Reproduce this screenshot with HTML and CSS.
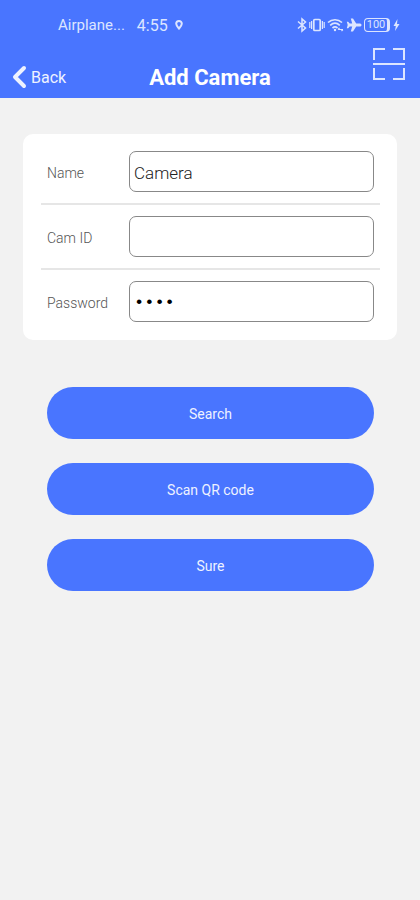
FILE: index.html
```html
<!DOCTYPE html>
<html lang="en">
<head>
<meta charset="utf-8">
<meta name="viewport" content="width=device-width, initial-scale=1">
<title>Add Camera</title>
<link rel="stylesheet" href="styles.css">
</head>
<body>
<header class="header">
  <div class="status">
    <span class="carrier">Airplane...</span>
    <span class="time">4:55</span>
    <svg class="pin" width="8" height="10" viewBox="0 0 8 10"><path d="M4 8.500C2.500 6.700 1.200 5.300 1.200 3.800a2.800 2.800 0 0 1 5.600 0C6.800 5.300 5.500 6.700 4 8.500z" fill="none" stroke="currentColor" stroke-width="2"/></svg>
    <div class="indicators">
      <svg width="10" height="16" viewBox="0 0 10 16" fill="none" stroke="currentColor" stroke-width="1.500"><path d="M1 4.500l7.500 6.500L5 14V2L8.500 5 1 11.500"/></svg>
      <svg width="16" height="16" viewBox="0 0 16 16" fill="none" stroke="currentColor" stroke-width="1.700"><rect x="4.800" y="2.500" width="6.400" height="11" rx="1"/><path d="M2.600 4v8M.8 5v6M13.400 4v8M15.200 5v6" stroke-width="1.200"/></svg>
      <svg width="17" height="16" viewBox="0 0 17 16" fill="none" stroke="currentColor" stroke-width="1.700"><path d="M1 5.500c4-3.700 10-3.700 14 0M3.200 8.300c3-2.600 6.600-2.600 9.600 0M5.500 11c1.700-1.400 3.400-1.400 5 0"/><circle cx="8" cy="13" r="1.200" fill="currentColor" stroke="none"/><path d="M11 12.500h5M11 12.500l1.500-1.500M16 12.500l-1.500 1.500" stroke-width="1.200"/></svg>
      <svg width="16" height="16" viewBox="0 0 16 16" fill="currentColor"><path d="M15.500 8c0-1-.9-1.500-2-1.500H10.200L7 1.500H4.800l1.400 5H3.700L2.200 4.800H.8L1.700 8l-.9 3.200h1.400l1.500-1.700h2.500l-1.400 5H7l3.200-5h3.300C14.600 9.500 15.500 9 15.500 8z"/></svg>
      <span class="battery">100</span>
      <svg width="7" height="12" viewBox="0 0 7 12" fill="currentColor"><path d="M4.500 0L.5 7h2.300L2 12l4.500-7H4z"/></svg>
    </div>
  </div>
  <nav class="nav">
    <a class="back" href="#"><svg width="15" height="24" viewBox="0 0 15 24" fill="none" stroke="currentColor" stroke-width="4" stroke-linecap="round" stroke-linejoin="round"><path d="M12 3L3 12l9 9"/></svg>Back</a>
    <h1 class="title">Add Camera</h1>
    <button class="scan" type="button" aria-label="Scan"><svg width="34" height="34" viewBox="0 0 34 34" fill="none" stroke="currentColor" stroke-width="2"><path d="M2 13V2h11M21 2h11v11M2 21v11h11M21 32h11V21M1 17h32"/></svg></button>
  </nav>
</header>
<main>
  <form class="form">
    <div class="card">
      <div class="row"><label for="name">Name</label><input id="name" type="text" value="Camera"></div>
      <div class="row"><label for="cam">Cam ID</label><input id="cam" type="text"></div>
      <div class="row"><label for="pass">Password</label><input id="pass" type="password" value="8888"></div>
    </div>
    <div class="actions">
      <button class="action" type="button">Search</button>
      <button class="action" type="button">Scan QR code</button>
      <button class="action" type="button">Sure</button>
    </div>
  </form>
</main>
</body>
</html>
```
FILE: styles.css
```css
* { box-sizing: border-box; }
body {
  margin: 0;
  background: #f2f2f2;
  font-family: Roboto, "Liberation Sans", sans-serif;
  font-size: 14px;
}
button, input { font-family: inherit; }
svg { display: block; flex: none; }
.header { background: #4975ff; color: #fff; }
.status {
  display: flex;
  align-items: center;
  height: 46px;
  padding: 4px 20px 0 58px;
  color: #dce5ff;
}
.carrier { font-size: 15px; }
.time { margin-left: 12px; font-size: 16px; }
.pin { margin-left: 7px; }
.indicators { display: flex; align-items: center; gap: 2px; margin-left: auto; }
.battery {
  width: 26px;
  margin-right: 1px;
  border: 1px solid;
  border-right-width: 3px;
  border-radius: 4px;
  font-size: 11px;
  line-height: 12px;
  text-align: center;
}
.nav {
  display: grid;
  grid-template-columns: 1fr auto 1fr;
  height: 52px;
  padding: 0 14px 0 14px;
}
.back, .title { padding-top: 10px; }
.back {
  display: flex;
  align-items: center;
  gap: 4px;
  margin-left: -2px;
  color: #eef2ff;
  font-size: 16px;
  text-decoration: none;
}
.title { align-self: center; margin: 0; font-size: 22px; font-weight: 700; }
.scan {
  align-self: start;
  justify-self: end;
  margin-top: 1px;
  padding: 0;
  border: 0;
  background: none;
  color: #dce5ff;
}
.form { padding: 36px 23px; }
.card { padding: 6px 17px 7px 18px; border-radius: 10px; background: #fff; }
.row {
  display: flex;
  align-items: center;
  padding: 11px 6px;
  border-bottom: 2px solid #e6e6e6;
}
.row:last-child { border-bottom: 0; }
.row label { flex: none; width: 82px; padding-top: 2px; color: #555; font-weight: 300; }
.row input {
  flex: 1;
  min-width: 0;
  height: 41px;
  padding: 2px 4px 0;
  border: 1px solid #888;
  border-radius: 7px;
  background: #fff;
  color: #222;
  font-size: 17px;
  font-weight: 300;
}
.row input[type="password"] { color: #000; font-family: "Liberation Mono", monospace; font-weight: 400; }
.actions { display: grid; gap: 24px; padding: 47px 23px 0 24px; }
.action {
  height: 52px;
  padding: 2px 0 0;
  border: 0;
  border-radius: 26px;
  background: #4975ff;
  color: #eef2ff;
  font-size: 14px;
}
```
